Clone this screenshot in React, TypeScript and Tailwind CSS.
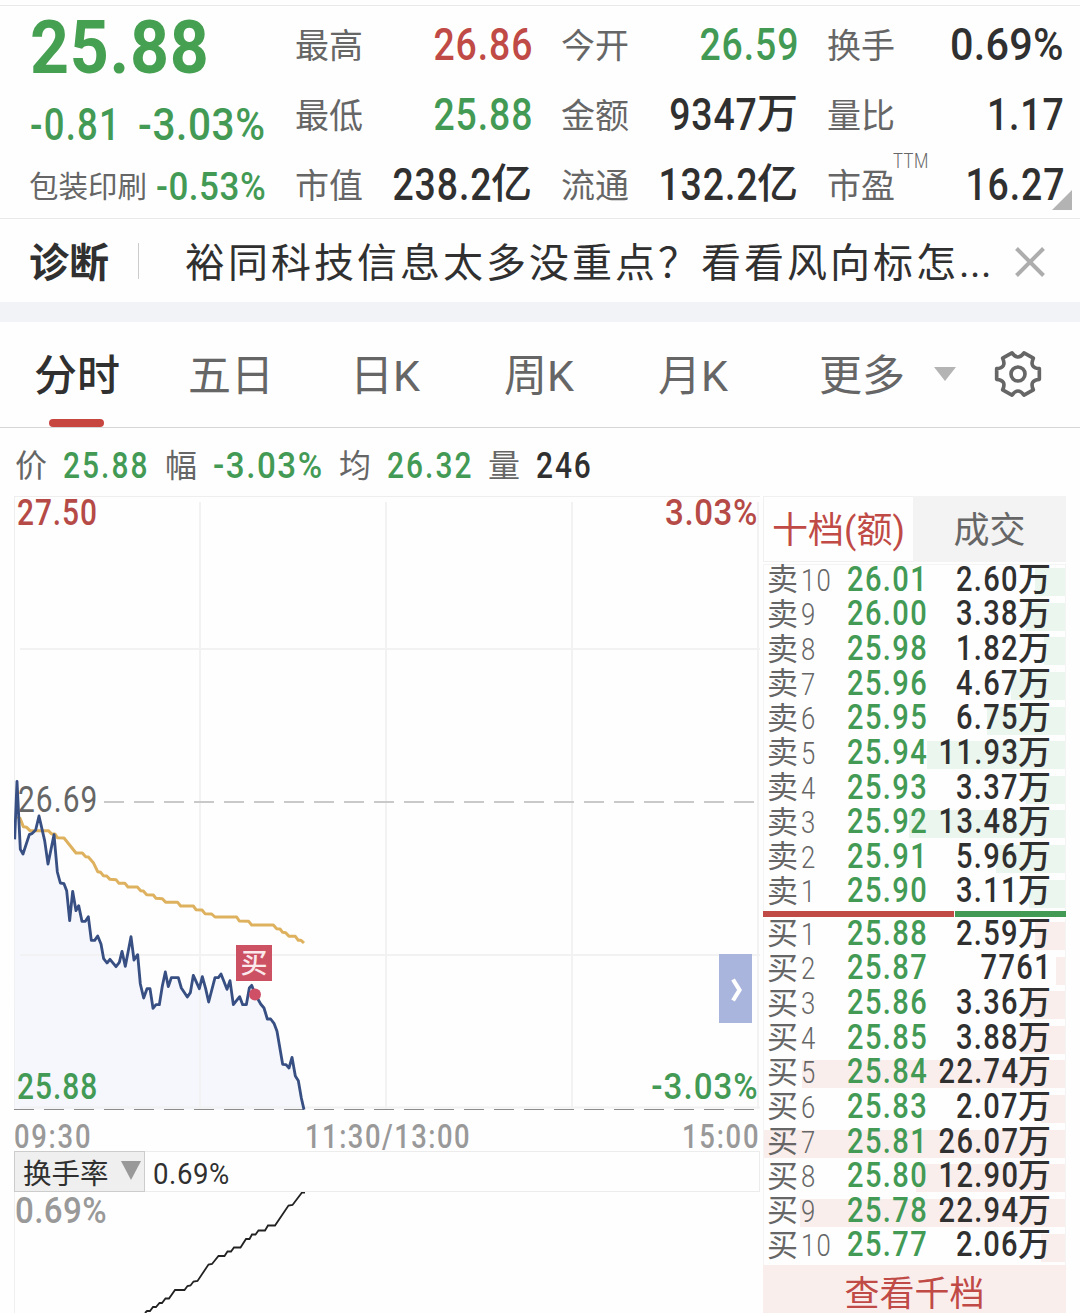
import type { ReactNode } from "react";

const GREEN = "text-[#439a55]";
const RED = "text-[#c04a45]";
const DARK = "text-[#303030]";
const GRAY = "text-[#666666]";

type NumProps = { children: ReactNode; className?: string; wide?: boolean };

/* Condensed figures, anchored on their right edge */
function NumR({ children, className = "", wide }: NumProps) {
  return (
    <span className={`inline-block origin-right whitespace-nowrap ${wide ? "scale-x-[0.92]" : "scale-x-[0.83]"} ${className}`}>
      {children}
    </span>
  );
}

/* Condensed figures, anchored on their left edge */
function NumL({ children, className = "", wide }: NumProps) {
  return (
    <span className={`inline-block origin-left whitespace-nowrap ${wide ? "scale-x-[0.92]" : "scale-x-[0.83]"} ${className}`}>
      {children}
    </span>
  );
}

type Stat = { label: string; value: string; unit?: string; tone: string; sup?: string; wide?: boolean };

const stats: Stat[] = [
  { label: "最高", value: "26.86", tone: RED },
  { label: "今开", value: "26.59", tone: GREEN },
  { label: "换手", value: "0.69%", tone: DARK, wide: true },
  { label: "最低", value: "25.88", tone: GREEN },
  { label: "金额", value: "9347", unit: "万", tone: DARK },
  { label: "量比", value: "1.17", tone: DARK },
  { label: "市值", value: "238.2", unit: "亿", tone: DARK },
  { label: "流通", value: "132.2", unit: "亿", tone: DARK },
  { label: "市盈", value: "16.27", tone: DARK, sup: "TTM" },
];

function Quote() {
  return (
    <section className="relative flex h-[214px] shrink-0 border-y border-[#e9e9e9] pl-[30px] pr-[16px]">
      <div className="flex w-[265px] shrink-0 flex-col leading-none">
        <div className="flex h-[84px] items-center text-[#46a052]">
          <NumL wide className="text-[74px] font-bold tracking-[0.8px]">25.88</NumL>
        </div>
        <div className={`flex h-[70px] items-center text-[44px] font-medium ${GREEN}`}>
          <div className="w-[108px]">
            <NumL className="tracking-[1.5px]">-0.81</NumL>
          </div>
          <NumL wide className="tracking-[0.7px]">-3.03%</NumL>
        </div>
        <div className="flex h-[54px] items-center">
          <span className={`-ml-px mt-[2px] w-[127px] text-[29.5px] ${GRAY}`}>包装印刷</span>
          <NumL wide className={`text-[38px] font-medium tracking-[0.6px] ${GREEN}`}>-0.53%</NumL>
        </div>
      </div>
      <div className="grid flex-1 auto-rows-[70px] grid-cols-3 gap-x-[29px] pt-[3px] leading-none">
        {stats.map((s) => (
          <div key={s.label} className="relative flex items-center justify-between">
            <span className={`mt-[3px] shrink-0 text-[34px] ${GRAY}`}>{s.label}</span>
            {s.sup && (
              <NumL className={`absolute left-[66px] top-[2px] text-[20px] font-light tracking-[0.6px] ${GRAY}`}>{s.sup}</NumL>
            )}
            <span className={`flex items-center text-[45px] font-medium ${s.tone}`}>
              <NumR wide={s.wide} className={s.wide ? "tracking-[0.3px]" : "-mr-[1px] tracking-[1.1px]"}>
                {s.value}
              </NumR>
              {s.unit && <span className="text-[41px]">{s.unit}</span>}
            </span>
          </div>
        ))}
      </div>
      <svg className="absolute bottom-[8px] right-[8px]" width="20" height="20" viewBox="0 0 20 20">
        <path d="M20 0V20H0Z" fill="#b3b3b3" />
      </svg>
    </section>
  );
}

function Diagnosis() {
  return (
    <section className="flex h-[83px] shrink-0 items-center pl-[29px] leading-none">
      <span className={`mt-[7px] w-[109px] text-[40px] font-bold ${DARK}`}>诊断</span>
      <span className="h-[36px] w-px bg-[#cccccc]" />
      <span className={`ml-[46px] mt-[7px] w-[830px] whitespace-nowrap text-[40px] tracking-[3px] ${DARK}`}>
        裕同科技信息太多没重点？看看风向标怎<span className="tracking-[0.5px]">...</span>
      </span>
      <svg width="30" height="30" viewBox="0 0 30 30" className="mt-[2px] shrink-0">
        <path d="M1.5 1.5L28.5 28.5M28.5 1.5L1.5 28.5" stroke="#adadad" strokeWidth="4" />
      </svg>
    </section>
  );
}

function Tabs() {
  return (
    <nav className={`flex h-[106px] shrink-0 border-b border-[#d6d6d6] text-[43px] leading-none ${GRAY}`}>
      <div className={`relative flex w-[154px] items-center justify-center pt-[3px] font-medium ${DARK}`}>
        分时
        <span className="absolute bottom-0 left-[49px] h-[8px] w-[55px] rounded-full bg-[#c84640]" />
      </div>
      {["五日", "日K", "周K", "月K"].map((t) => (
        <div key={t} className="flex w-[154px] items-center justify-center pt-[3px]">
          {t}
        </div>
      ))}
      <div className="flex items-center pl-[49px]">
        <span className="mt-[3px]">更多</span>
        <svg width="22" height="14" viewBox="0 0 22 14" className="-mt-[2px] ml-[29px]">
          <path d="M0 0H22L11 14Z" fill="#b4b4b4" />
        </svg>
      </div>
      <div className="flex items-center pb-[1px] pl-[37px]">
        <svg width="50" height="50" viewBox="-75 -75 150 150" fill="none" stroke="#666666" strokeWidth="11" strokeLinejoin="round">
          <path d="M64 -16V16Q33 19 46 47.5L18 63.5Q0 38.5 -18 63.5L-46 47.5Q-33 19 -64 16V-16Q-33 -19 -46 -47.5L-18 -63.5Q0 -38.5 18 -63.5L46 -47.5Q33 -19 64 -16Z" />
          <circle r="21" />
        </svg>
      </div>
    </nav>
  );
}

function InfoRow() {
  const items = [
    { k: "价", v: "25.88", w: "w-[102px]", fit: "tracking-[2.5px]", tone: GREEN, wide: false },
    { k: "幅", v: "-3.03%", w: "w-[126px]", fit: "tracking-[1.7px]", tone: GREEN, wide: true },
    { k: "均", v: "26.32", w: "w-[101px]", fit: "tracking-[2.5px]", tone: GREEN, wide: false },
    { k: "量", v: "246", w: "w-[80px]", fit: "tracking-[2.3px]", tone: DARK, wide: false },
  ];
  return (
    <section className="flex h-[68px] shrink-0 items-center pl-[15px] pt-[7px] leading-none">
      {items.map((i) => (
        <div key={i.k} className="flex items-center">
          <span className={`w-[48px] text-[32px] ${GRAY}`}>{i.k}</span>
          <span className={i.w}>
            <NumL wide={i.wide} className={`text-[36px] font-medium ${i.fit} ${i.tone}`}>{i.v}</NumL>
          </span>
        </div>
      ))}
    </section>
  );
}

const PRICE =
  "44,238 51,64 61,268 69,282 88,224 97,220 107,210 117,168 134,242 144,312 162,224 172,336 181,369 192,371 200,392 209,482 218,394 228,452 236,437 246,484 256,484 265,470 274,541 284,541 293,528 303,552 311,596 321,609 330,598 348,620 358,607 366,574 376,619 393,530 402,600 413,584 421,672 431,714 441,686 450,686 459,745 468,734 478,734 487,678 496,636 505,680 514,653 535,653 544,684 562,711 571,698 580,646 598,686 607,650 617,686 626,726 645,653 655,653 663,642 681,688 690,662 700,734 719,710 728,734 739,734 748,684 755,676 764,700 782,732 792,744 802,777 812,777 822,790 831,814 848,913 858,914 867,924 876,892 886,948 895,962 904,1014 912,1049";
const AVERAGE =
  "52,170 60,175 70,200 80,202 90,212 145,212 155,222 165,222 172,233 192,234 228,279 247,279 257,290 265,291 280,308 293,335 302,337 310,347 320,348 330,358 348,359 357,370 375,370 384,381 412,381 422,392 430,393 440,404 460,405 468,415 487,416 497,427 533,427 542,438 580,438 588,449 606,450 615,461 635,462 645,471 710,471 718,483 746,484 755,495 820,495 830,506 840,507 848,517 857,518 867,529 886,529 895,541 903,541 912,549";
const TURNOVER =
  "145,1313 147,1311 150,1311 153,1307 156,1307 159.5,1303 162,1303 165.5,1298.5 169,1298.5 175,1290 184.5,1290 187.5,1286 190.5,1285.5 193.5,1281.5 197.5,1281 208.5,1264.5 212,1264 218.5,1256 224.5,1256 227.5,1251.5 231,1251.5 234,1247.5 240.5,1247.5 246,1239 249.5,1239 252,1234.5 255.5,1234.5 258.5,1230.5 265,1230.5 268,1225.5 275,1225.5 288.5,1205.5 292.5,1205 302,1192.5 305,1192.5";

function PriceChart() {
  return (
    <div className="relative h-[616px] w-[746px] shrink-0 font-medium leading-none">
      <svg width="746" height="616" viewBox="14 496 746 616" className="block">
        <g fill="none">
          <path d="M14 496.5H760M14.5 496V1109" stroke="#eeeeee" strokeWidth="1" />
          <g transform="translate(0 760) scale(0.33333)">
            <polygon points={`${PRICE} 44,1049`} fill="#f5f7fc" />
          </g>
          <path d="M200 502V1109M386 502V1109M572 502V1109M758 502V1109M20 649H760M20 955H760M20 1107.5H760" stroke="#f2f2f3" strokeWidth="2" />
          <path d="M104 802H755" stroke="#c9c9c9" strokeWidth="2" strokeDasharray="20 10" />
          <path d="M14 1109.5H755" stroke="#8c8c8c" strokeWidth="1" strokeDasharray="20 10" />
        </g>
      </svg>
      <NumL className="absolute left-[3px] top-[-1px] text-[36px] tracking-[1.1px] text-[#b54a46]">27.50</NumL>
      <NumR wide className="absolute right-[2px] top-[-1px] text-[36px] tracking-[0.6px] text-[#b54a46]">3.03%</NumR>
      <NumL className={`absolute left-[4px] top-[286px] text-[36px] font-normal tracking-[1.3px] ${GRAY}`}>26.69</NumL>
      <NumL className={`absolute left-[3px] top-[573px] text-[36px] tracking-[1.2px] ${GREEN}`}>25.88</NumL>
      <NumR wide className={`absolute right-[1px] top-[573px] text-[36px] tracking-[1.1px] ${GREEN}`}>-3.03%</NumR>
      <svg width="746" height="616" viewBox="14 496 746 616" className="absolute inset-0">
        <g fill="none" strokeLinejoin="round" transform="translate(0 760) scale(0.33333)">
          <polyline points={AVERAGE} stroke="#deb15f" strokeWidth="9" />
          <polyline points={PRICE} stroke="#374f82" strokeWidth="8.5" />
        </g>
        <circle cx="255" cy="994.5" r="6" fill="#cf4f66" />
      </svg>
      <span className="absolute left-[222px] top-[449px] flex h-[36px] w-[36px] items-center justify-center bg-[#cb5163] pt-[2px] text-[27px] text-[#fbe9ec]">
        买
      </span>
      <span className="absolute left-[705px] top-[458px] flex h-[69px] w-[33px] items-center justify-center bg-[#a9b5dc]">
        <svg width="12" height="24" viewBox="0 0 12 24" className="ml-[3px] mt-[2px]" fill="none">
          <path d="M2 1.5L8.5 12L2 22.5" stroke="#ffffff" strokeWidth="4.2" />
        </svg>
      </span>
    </div>
  );
}

function TurnoverPanel() {
  return (
    <div className="flex w-[746px] flex-1 flex-col leading-none">
      <div className="flex h-[39px] shrink-0 items-center justify-between pt-[9px] text-[33px] font-medium text-[#999999]">
        <div className="w-[85px]">
          <NumL className="tracking-[2.1px]">09:30</NumL>
        </div>
        <span className="ml-[3px] inline-block scale-x-[0.83] whitespace-nowrap tracking-[1.8px]">11:30/13:00</span>
        <div className="flex w-[85px] justify-end">
          <NumR className="tracking-[2.1px]">15:00</NumR>
        </div>
      </div>
      <div className="flex h-[41px] shrink-0 items-center border border-[#ececec]">
        <div className={`-my-px -ml-px flex h-[41px] w-[131px] items-center border border-[#cccccc] bg-[#efefef] pl-[8px] text-[28.5px] ${DARK}`}>
          <span className="mt-[7px]">换手率</span>
          <svg width="20" height="19" viewBox="0 0 20 19" className="-mt-[2px] ml-[12px]">
            <path d="M0 0H20L10 19Z" fill="#999999" />
          </svg>
        </div>
        <NumL wide className={`ml-[8px] mt-[5px] text-[30px] tracking-[0.6px] ${DARK}`}>0.69%</NumL>
      </div>
      <div className="relative flex-1 border-l border-[#f0f0f0]">
        <NumL wide className="mt-[1px] text-[36px] font-medium tracking-[0.4px] text-[#999999]">0.69%</NumL>
        <svg width="746" height="121" viewBox="14 1192 746 121" className="absolute -left-px top-0">
          <polyline points={TURNOVER} fill="none" stroke="#222222" strokeWidth="1.8" />
        </svg>
      </div>
    </div>
  );
}

type Level = [name: string, n: string, price: string, amount: string, unit: string, size: number];

const asks: Level[] = [
  ["卖", "10", "26.01", "2.60", "万", 2.6],
  ["卖", "9", "26.00", "3.38", "万", 3.38],
  ["卖", "8", "25.98", "1.82", "万", 1.82],
  ["卖", "7", "25.96", "4.67", "万", 4.67],
  ["卖", "6", "25.95", "6.75", "万", 6.75],
  ["卖", "5", "25.94", "11.93", "万", 11.93],
  ["卖", "4", "25.93", "3.37", "万", 3.37],
  ["卖", "3", "25.92", "13.48", "万", 13.48],
  ["卖", "2", "25.91", "5.96", "万", 5.96],
  ["卖", "1", "25.90", "3.11", "万", 3.11],
];

const bids: Level[] = [
  ["买", "1", "25.88", "2.59", "万", 2.59],
  ["买", "2", "25.87", "7761", "", 0.7761],
  ["买", "3", "25.86", "3.36", "万", 3.36],
  ["买", "4", "25.85", "3.88", "万", 3.88],
  ["买", "5", "25.84", "22.74", "万", 22.74],
  ["买", "6", "25.83", "2.07", "万", 2.07],
  ["买", "7", "25.81", "26.07", "万", 26.07],
  ["买", "8", "25.80", "12.90", "万", 12.9],
  ["买", "9", "25.78", "22.94", "万", 22.94],
  ["买", "10", "25.77", "2.06", "万", 2.06],
];

const MAX_SIZE = 26.07;

function LevelRow({ level, bar }: { level: Level; bar: string }) {
  const [name, n, price, amount, unit, size] = level;
  return (
    <div className="relative flex h-[34.63px] shrink-0 items-center">
      <span className={`absolute right-0 top-[3px] h-[28px] ${bar}`} style={{ width: `${(size / MAX_SIZE) * 100}%` }} />
      <div className="relative -mt-[6px] flex flex-1 items-center pl-[3px] pr-[14px]">
        <span className={`mt-[1px] shrink-0 text-[31px] ${GRAY}`}>{name}</span>
        <NumL className={`ml-[3px] mt-[2px] w-[46px] shrink-0 text-[31px] font-light tracking-[1.6px] ${GRAY}`}>{n}</NumL>
        <NumL className={`w-[60px] shrink-0 text-[35px] font-medium tracking-[1.7px] ${GREEN}`}>{price}</NumL>
        <span className={`ml-auto flex shrink-0 items-center font-medium ${DARK}`}>
          <NumR className="-mr-[1px] text-[35px] tracking-[1.6px]">{amount}</NumR>
          {unit && <span className="text-[33px]">{unit}</span>}
        </span>
      </div>
    </div>
  );
}

function OrderBook() {
  return (
    <aside className="ml-[3px] flex w-[303px] shrink-0 flex-col leading-none">
      <div className="flex h-[66px] shrink-0 text-[36px]">
        <div className={`flex w-[150px] items-center justify-center border border-r-0 border-[#f0f0f0] pt-[4px] ${RED}`}>十档(额)</div>
        <div className={`flex flex-1 items-center justify-center bg-[#f3f3f3] pt-[4px] ${GRAY}`}>成交</div>
      </div>
      <div className="mt-[2px] flex shrink-0 flex-col border-x border-t border-[#f4f4f4]">
        {asks.map((l) => (
          <LevelRow key={l[1]} level={l} bar="bg-[#ebf6ee]" />
        ))}
      </div>
      <div className="-mt-[0.3px] flex h-[6px] shrink-0 gap-px">
        <span className="w-[191px] bg-[#c04a45]" />
        <span className="flex-1 bg-[#439a55]" />
      </div>
      <div className="mt-[2px] flex shrink-0 flex-col border-x border-[#f4f4f4]">
        {bids.map((l) => (
          <LevelRow key={l[1]} level={l} bar="bg-[#faeeed]" />
        ))}
      </div>
      <div className={`flex flex-1 items-center justify-center bg-[#faeeed] pt-[10px] text-[35px] ${RED}`}>查看千档</div>
    </aside>
  );
}

export default function App() {
  return (
    <main className="flex h-[1313px] w-[1080px] flex-col overflow-hidden bg-[#fefefe] pt-[5px] font-['Roboto','Noto_Sans_CJK_SC',sans-serif]">
      <Quote />
      <Diagnosis />
      <div className="h-[20px] shrink-0 bg-[#f2f3f6]" />
      <Tabs />
      <InfoRow />
      <div className="flex flex-1 pl-[14px]">
        <div className="flex flex-col">
          <PriceChart />
          <TurnoverPanel />
        </div>
        <OrderBook />
      </div>
    </main>
  );
}
